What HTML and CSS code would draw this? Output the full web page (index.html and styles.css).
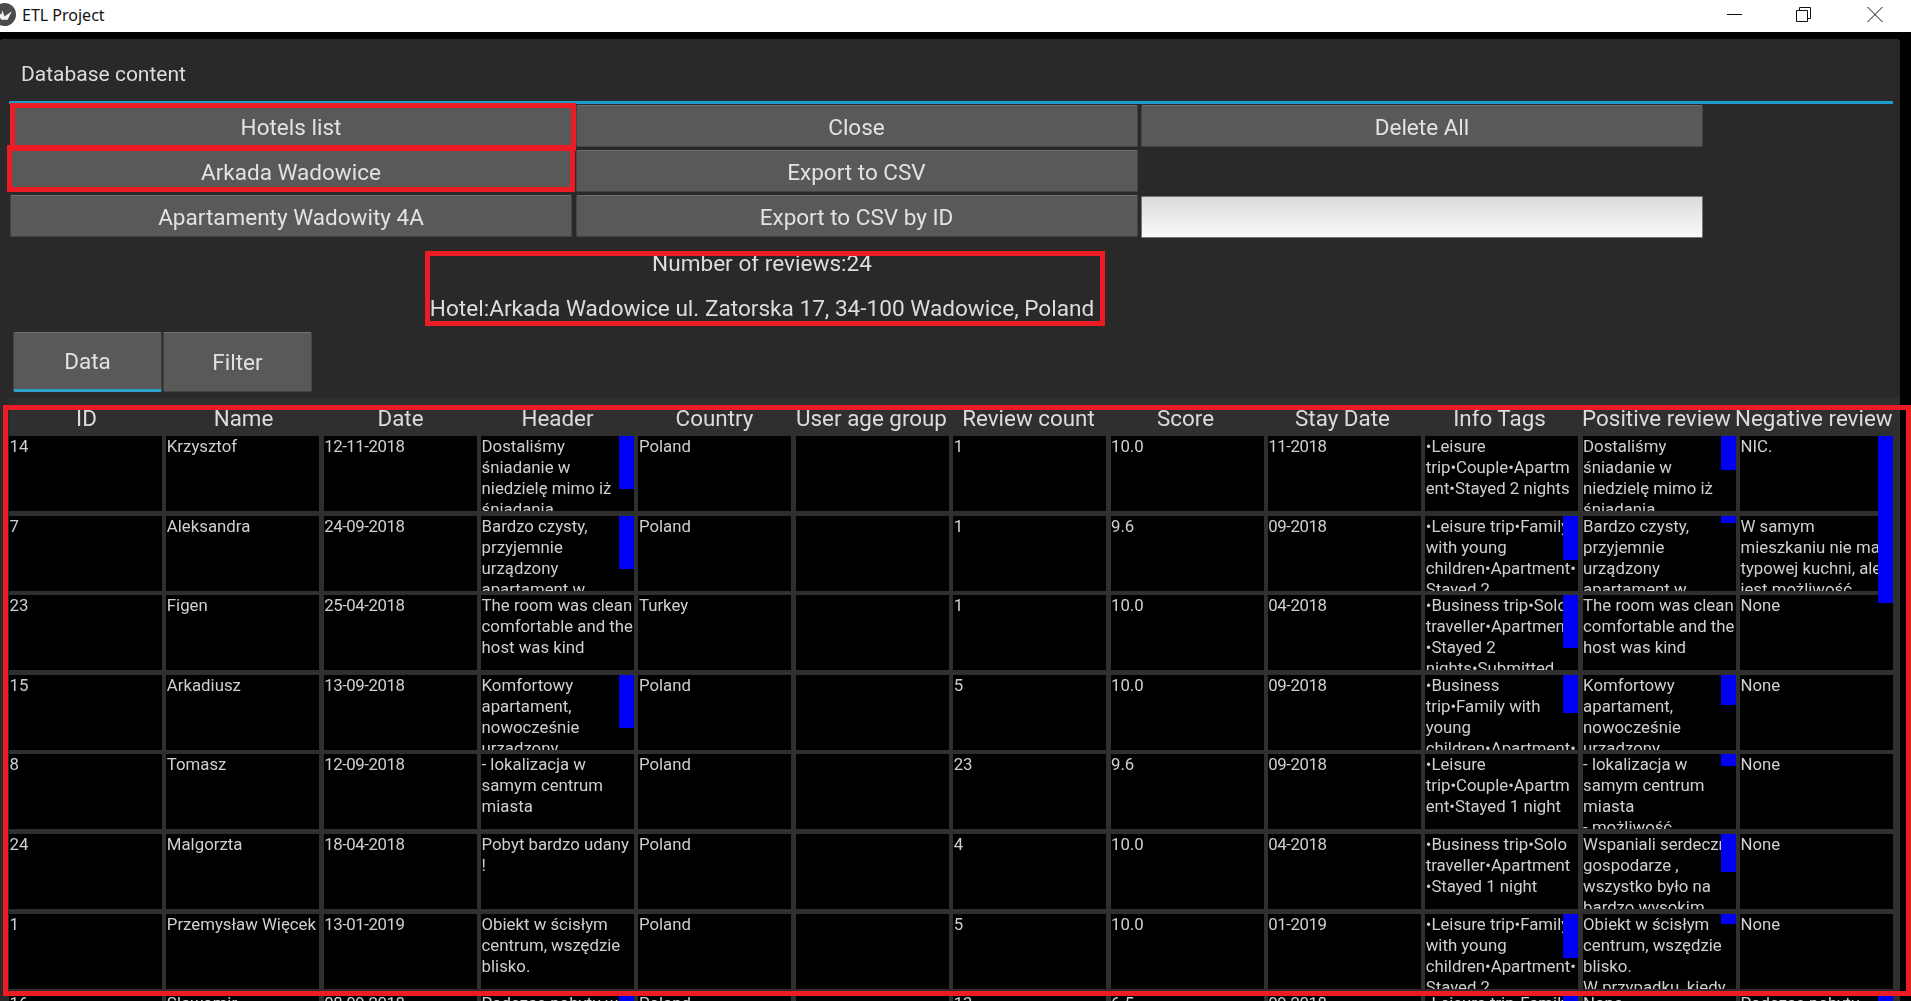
FILE: index.html
```html
<!DOCTYPE html>
<html lang="en">
<head>
    <meta charset="UTF-8">
    <title>ETL Project</title>
    <link rel="stylesheet" href="styles.css">
</head>
<body>
    <header class="titlebar">
        <svg class="app-icon" viewBox="0 0 22 22">
            <circle cx="11" cy="11" r="11" fill="#4b4b4b"/>
            <polygon points="3,8 8,11 9,7 11,13 18,8 14,16 8,16" fill="#f2f2f2"/>
        </svg>
        <span class="app-title">ETL Project</span>
        <div class="window-controls">
            <svg class="win-min" viewBox="0 0 15 15"><path d="M0 7.5H15" stroke="#111" fill="none"/></svg>
            <svg class="win-max" viewBox="0 0 15 15"><path d="M.5 3.5H11.5V14.5H.5ZM3.5 3.5V.5H14.5V11.5H11.5" stroke="#111" fill="none"/></svg>
            <svg class="win-close" viewBox="0 0 16 15"><path d="M.5 0L15.5 15M15.5 0L.5 15" stroke="#111" fill="none"/></svg>
        </div>
    </header>

    <main class="panel">
        <h1 class="panel-title">Database content</h1>
        <div class="panel-line"></div>

        <div class="actions">
            <button class="btn">Hotels list</button>
            <button class="btn">Close</button>
            <button class="btn">Delete All</button>
            <button class="btn">Arkada Wadowice</button>
            <button class="btn">Export to CSV</button>
            <div></div>
            <button class="btn">Apartamenty Wadowity 4A</button>
            <button class="btn">Export to CSV by ID</button>
            <input class="id-input" type="text">
        </div>

        <div class="summary">
            <p>Number of reviews:24</p>
            <p>Hotel:Arkada Wadowice ul. Zatorska 17, 34-100 Wadowice, Poland</p>
        </div>

        <div class="tabs">
            <button class="tab tab-active">Data</button>
            <button class="tab">Filter</button>
        </div>

        <section class="reviews">
            <div class="reviews-head">
                <div>ID</div><div>Name</div><div>Date</div><div>Header</div><div>Country</div><div>User age group</div>
                <div>Review count</div><div>Score</div><div>Stay Date</div><div>Info Tags</div><div>Positive review</div><div>Negative review</div>
            </div>
            <div class="reviews-body">
                <div class="cell"><div class="txt">14</div></div>
                <div class="cell"><div class="txt">Krzysztof</div></div>
                <div class="cell"><div class="txt date">12-11-2018</div></div>
                <div class="cell"><div class="txt">Dostaliśmy<br>śniadanie w<br>niedzielę mimo iż<br>śniadania</div><i class="bar" style="height:53px"></i></div>
                <div class="cell"><div class="txt">Poland</div></div>
                <div class="cell"></div>
                <div class="cell"><div class="txt">1</div></div>
                <div class="cell"><div class="txt">10.0</div></div>
                <div class="cell"><div class="txt date">11-2018</div></div>
                <div class="cell"><div class="txt">•Leisure<br>trip•Couple•Apartm<br>ent•Stayed 2 nights</div></div>
                <div class="cell"><div class="txt">Dostaliśmy<br>śniadanie w<br>niedzielę mimo iż<br>śniadania</div><i class="bar" style="height:34px"></i></div>
                <div class="cell"><div class="txt">NIC.</div><i class="bar" style="height:167px"></i></div>

                <div class="cell"><div class="txt">7</div></div>
                <div class="cell"><div class="txt">Aleksandra</div></div>
                <div class="cell"><div class="txt date">24-09-2018</div></div>
                <div class="cell"><div class="txt">Bardzo czysty,<br>przyjemnie<br>urządzony<br>apartament w</div><i class="bar" style="height:53px"></i></div>
                <div class="cell"><div class="txt">Poland</div></div>
                <div class="cell"></div>
                <div class="cell"><div class="txt">1</div></div>
                <div class="cell"><div class="txt">9.6</div></div>
                <div class="cell"><div class="txt date">09-2018</div></div>
                <div class="cell"><div class="txt">•Leisure trip•Family<br>with young<br>children•Apartment•<br>Stayed 2</div><i class="bar" style="height:44px"></i></div>
                <div class="cell"><div class="txt">Bardzo czysty,<br>przyjemnie<br>urządzony<br>apartament w</div><i class="bar" style="height:7px"></i></div>
                <div class="cell"><div class="txt">W samym<br>mieszkaniu nie ma<br>typowej kuchni, ale<br>jest możliwość</div></div>

                <div class="cell"><div class="txt">23</div></div>
                <div class="cell"><div class="txt">Figen</div></div>
                <div class="cell"><div class="txt date">25-04-2018</div></div>
                <div class="cell"><div class="txt">The room was clean<br>comfortable and the<br>host was kind</div></div>
                <div class="cell"><div class="txt">Turkey</div></div>
                <div class="cell"></div>
                <div class="cell"><div class="txt">1</div></div>
                <div class="cell"><div class="txt">10.0</div></div>
                <div class="cell"><div class="txt date">04-2018</div></div>
                <div class="cell"><div class="txt">•Business trip•Solo<br>traveller•Apartment<br>•Stayed 2<br>nights•Submitted</div><i class="bar" style="height:53px"></i></div>
                <div class="cell"><div class="txt">The room was clean<br>comfortable and the<br>host was kind</div></div>
                <div class="cell"><div class="txt">None</div></div>

                <div class="cell"><div class="txt">15</div></div>
                <div class="cell"><div class="txt">Arkadiusz</div></div>
                <div class="cell"><div class="txt date">13-09-2018</div></div>
                <div class="cell"><div class="txt">Komfortowy<br>apartament,<br>nowocześnie<br>urządzony</div><i class="bar" style="height:53px"></i></div>
                <div class="cell"><div class="txt">Poland</div></div>
                <div class="cell"></div>
                <div class="cell"><div class="txt">5</div></div>
                <div class="cell"><div class="txt">10.0</div></div>
                <div class="cell"><div class="txt date">09-2018</div></div>
                <div class="cell"><div class="txt">•Business<br>trip•Family with<br>young<br>children•Apartment•</div><i class="bar" style="height:38px"></i></div>
                <div class="cell"><div class="txt">Komfortowy<br>apartament,<br>nowocześnie<br>urządzony</div><i class="bar" style="height:30px"></i></div>
                <div class="cell"><div class="txt">None</div></div>

                <div class="cell"><div class="txt">8</div></div>
                <div class="cell"><div class="txt">Tomasz</div></div>
                <div class="cell"><div class="txt date">12-09-2018</div></div>
                <div class="cell"><div class="txt">- lokalizacja w<br>samym centrum<br>miasta</div></div>
                <div class="cell"><div class="txt">Poland</div></div>
                <div class="cell"></div>
                <div class="cell"><div class="txt">23</div></div>
                <div class="cell"><div class="txt">9.6</div></div>
                <div class="cell"><div class="txt date">09-2018</div></div>
                <div class="cell"><div class="txt">•Leisure<br>trip•Couple•Apartm<br>ent•Stayed 1 night</div></div>
                <div class="cell"><div class="txt">- lokalizacja w<br>samym centrum<br>miasta<br>- możliwość</div><i class="bar" style="height:12px"></i></div>
                <div class="cell"><div class="txt">None</div></div>

                <div class="cell"><div class="txt">24</div></div>
                <div class="cell"><div class="txt">Malgorzta</div></div>
                <div class="cell"><div class="txt date">18-04-2018</div></div>
                <div class="cell"><div class="txt">Pobyt bardzo udany<br>!</div></div>
                <div class="cell"><div class="txt">Poland</div></div>
                <div class="cell"></div>
                <div class="cell"><div class="txt">4</div></div>
                <div class="cell"><div class="txt">10.0</div></div>
                <div class="cell"><div class="txt date">04-2018</div></div>
                <div class="cell"><div class="txt">•Business trip•Solo<br>traveller•Apartment<br>•Stayed 1 night</div></div>
                <div class="cell"><div class="txt">Wspaniali serdeczni<br>gospodarze ,<br>wszystko było na<br>bardzo wysokim</div><i class="bar" style="height:38px"></i></div>
                <div class="cell"><div class="txt">None</div></div>

                <div class="cell"><div class="txt">1</div></div>
                <div class="cell"><div class="txt">Przemysław Więcek</div></div>
                <div class="cell"><div class="txt date">13-01-2019</div></div>
                <div class="cell"><div class="txt">Obiekt w ścisłym<br>centrum, wszędzie<br>blisko.</div></div>
                <div class="cell"><div class="txt">Poland</div></div>
                <div class="cell"></div>
                <div class="cell"><div class="txt">5</div></div>
                <div class="cell"><div class="txt">10.0</div></div>
                <div class="cell"><div class="txt date">01-2019</div></div>
                <div class="cell"><div class="txt">•Leisure trip•Family<br>with young<br>children•Apartment•<br>Stayed 2</div><i class="bar" style="height:44px"></i></div>
                <div class="cell"><div class="txt">Obiekt w ścisłym<br>centrum, wszędzie<br>blisko.<br>W przypadku, kiedy</div><i class="bar" style="height:10px"></i></div>
                <div class="cell"><div class="txt">None</div></div>

                <div class="cell"><div class="txt">16</div></div>
                <div class="cell"><div class="txt">Sławomir</div></div>
                <div class="cell"><div class="txt date">08-09-2018</div></div>
                <div class="cell"><div class="txt">Podczas pobytu w</div><i class="bar" style="height:40px"></i></div>
                <div class="cell"><div class="txt">Poland</div></div>
                <div class="cell"></div>
                <div class="cell"><div class="txt">13</div></div>
                <div class="cell"><div class="txt">6.5</div></div>
                <div class="cell"><div class="txt date">09-2018</div></div>
                <div class="cell"><div class="txt">•Leisure trip•Family</div><i class="bar" style="height:40px"></i></div>
                <div class="cell"><div class="txt">None</div></div>
                <div class="cell"><div class="txt">Podczas pobytu</div><i class="bar" style="height:40px"></i></div>
            </div>
        </section>
    </main>

    <!-- red annotation frames drawn over the screenshot -->
    <div class="mark mark-hotels"></div>
    <div class="mark mark-selected"></div>
    <div class="mark mark-summary"></div>
    <div class="mark mark-table"></div>
</body>
</html>
```

FILE: styles.css
```css
html, body {
    margin: 0;
    padding: 0;
    height: 100%;
    overflow: hidden;
}
body {
    position: relative;
    background-color: #000;
    font-family: Roboto, sans-serif;
    color: #dcdcdc;
}

.titlebar {
    display: flex;
    align-items: center;
    height: 32px;
    background-color: #fff;
}
.app-icon {
    width: 23px;
    height: 23px;
    margin-left: -7px;
    margin-top: -4px;
    flex: none;
}
.app-title {
    margin-left: 6px;
    margin-top: -2px;
    font-family: "Noto Sans", sans-serif;
    font-size: 16px;
    color: #111;
}
.window-controls {
    display: flex;
    align-items: flex-start;
    margin-left: auto;
    margin-right: 28px;
    margin-top: -4px;
}
.window-controls svg {
    display: block;
    width: 15px;
    height: 15px;
}
.win-max {
    margin-left: 54px;
}
.window-controls .win-close {
    width: 16px;
    margin-left: 56px;
}

.panel {
    width: 1900px;
    height: 962px;
    margin-top: 7px;
    background-color: #292929;
    border-radius: 3px 3px 0 0;
    overflow: hidden;
    filter: blur(0.45px);
}
.panel-title {
    height: 38px;
    margin: 0;
    padding: 24px 0 0 21px;
    font-size: 21px;
    font-weight: 400;
    line-height: 22px;
}
.panel-line {
    width: 1884px;
    height: 3px;
    margin-left: 9px;
    background-color: #1f9ccb;
}

.actions {
    display: grid;
    grid-template-columns: repeat(3, 562px);
    grid-auto-rows: 42px;
    column-gap: 3.5px;
    row-gap: 3px;
    margin: 1px 0 0 10px;
}
.btn, .tab {
    border: 1px solid #454545;
    border-top-color: #717171;
    border-radius: 2px;
    background-color: #595959;
    color: #e2e2e2;
    font-family: Roboto, sans-serif;
    font-size: 22.5px;
    padding: 0;
}
.btn {
    padding-top: 1px;
}
.id-input {
    box-sizing: border-box;
    height: 42px;
    margin-top: 1px;
    border: 1px solid #777;
    border-radius: 1px;
    background: linear-gradient(#dbdbdb, #fafafa);
}

.summary {
    width: 1524px;
    margin-top: 3.5px;
    text-align: center;
    font-size: 22.6px;
    line-height: 45px;
}
.summary p {
    margin: 0;
}

.tabs {
    display: flex;
    gap: 1px;
    height: 60px;
    margin: 1.5px 0 0 13px;
}
.tab {
    width: 149px;
    height: 60px;
    box-sizing: border-box;
}
.tab-active {
    border-bottom: 3px solid #2f9fcb;
}

.reviews {
    margin: 6px 0 0 9px;
    width: 1884px;
    padding-right: 7px;
    height: 603px;
    background-color: #2f2f2f;
}
.reviews-head {
    display: grid;
    grid-template-columns: repeat(12, 157px);
    height: 38px;
    margin-left: -1px;
    text-align: center;
    font-size: 22.4px;
    line-height: 40px;
    white-space: nowrap;
}
.reviews-body {
    display: grid;
    grid-template-columns: repeat(12, minmax(0, 1fr));
    column-gap: 4.3px;
    grid-auto-rows: 75px;
    row-gap: 4.6px;
    font-size: 16.8px;
    line-height: 21px;
    color: #cfcfcf;
}
.cell {
    position: relative;
    background-color: #000;
}
.txt {
    height: 100%;
    padding-left: 0.5px;
    overflow: hidden;
    white-space: nowrap;
}
.date {
    letter-spacing: -0.45px;
}
.bar {
    position: absolute;
    top: 0;
    right: 0;
    z-index: 1;
    width: 15px;
    background-color: #0000f5;
}

.mark {
    position: absolute;
    box-sizing: border-box;
    border: 5px solid #ed1c24;
    z-index: 2;
}
.mark-hotels {
    left: 10px;
    top: 103px;
    width: 566px;
    height: 48px;
}
.mark-selected {
    left: 7px;
    top: 145px;
    width: 568px;
    height: 47px;
}
.mark-summary {
    left: 425px;
    top: 251px;
    width: 680px;
    height: 75px;
}
.mark-table {
    left: 3px;
    top: 405px;
    width: 1908px;
    height: 591px;
}
```
